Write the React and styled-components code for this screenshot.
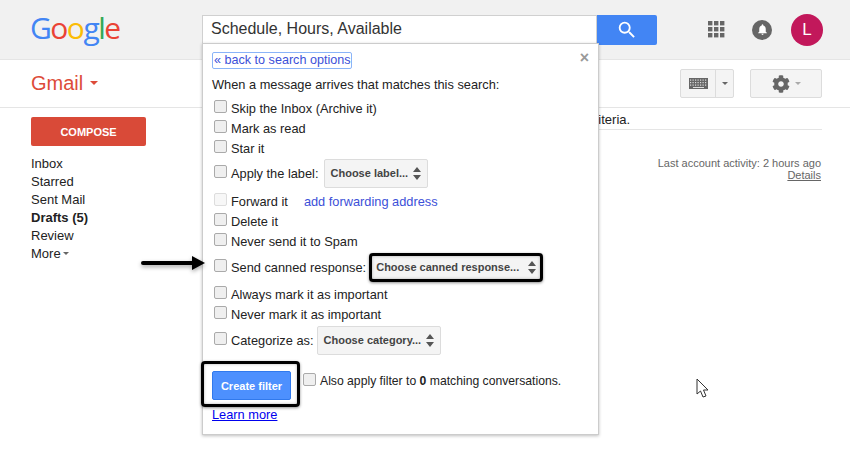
import React from 'react'
import styled, { createGlobalStyle } from 'styled-components'
import { FaCog } from 'react-icons/fa'
import { MdNotifications, MdSearch } from 'react-icons/md'

const GlobalStyle = createGlobalStyle`
  html, body { margin: 0; padding: 0; background: #fff; }
  body { font-family: "Liberation Sans", Arial, sans-serif; font-size: 13px; color: #222; }
`

const Page = styled.div`
  position: relative;
  width: 850px;
  height: 451px;
  overflow: hidden;
`
const Header = styled.header`
  display: flex;
  align-items: center;
  height: 59px;
  background: #f1f1f1;
  border-bottom: 1px solid #e5e5e5;
  padding-left: 30px;
  box-sizing: content-box;
`
const Logo = styled.div`
  width: 172px;
  font-family: "Open Sans", sans-serif;
  font-size: 30px;
  font-weight: 500;
  letter-spacing: -1.5px;
  line-height: 1;
  margin-top: -3px;
`
const Letter = styled.span`
  color: ${p => p.$c};
`
const SearchBox = styled.div`
  display: flex;
  align-items: center;
  box-sizing: border-box;
  width: 395px;
  height: 29px;
  padding: 0 0 2px 8px;
  background: #fff;
  border: 1px solid #d0d0d0;
  font-size: 16px;
  color: #333;
`
const SearchButton = styled.div`
  display: flex;
  align-items: center;
  justify-content: center;
  width: 60px;
  height: 30px;
  background: #4285f4;
  border-radius: 0 2px 2px 0;
  color: #fff;
  font-size: 22px;
`
const HeadIcons = styled.div`
  display: flex;
  align-items: center;
  margin-left: 51px;
`
const Apps = styled.svg`
  width: 17px;
  height: 17px;
  fill: #666;
`
const Bell = styled.div`
  display: flex;
  align-items: center;
  justify-content: center;
  width: 20px;
  height: 20px;
  margin-left: 27px;
  border-radius: 50%;
  background: #666;
  color: #fff;
  font-size: 13px;
`
const Avatar = styled.div`
  display: flex;
  align-items: center;
  justify-content: center;
  width: 32px;
  height: 32px;
  margin-left: 19px;
  border-radius: 50%;
  background: #c2185b;
  color: #fff;
  font-size: 17px;
`
const SubBar = styled.div`
  display: flex;
  align-items: center;
  height: 47px;
  padding: 0 28px 0 31px;
  border-bottom: 1px solid #e5e5e5;
`
const GmailTitle = styled.div`
  display: flex;
  align-items: center;
  flex: 1;
  font-size: 20px;
  color: #dd4b39;
  margin-top: -1px;
`
const Caret = styled.span`
  display: inline-block;
  width: 0;
  height: 0;
  border-left: ${p => p.$s || 3}px solid transparent;
  border-right: ${p => p.$s || 3}px solid transparent;
  border-top: ${p => p.$s || 3}px solid ${p => p.$c || '#666'};
  margin-left: ${p => p.$m || 0}px;
`
const ToolButton = styled.div`
  display: flex;
  align-items: center;
  justify-content: center;
  box-sizing: border-box;
  height: 29px;
  width: ${p => p.$w}px;
  margin-left: ${p => p.$ml || 0}px;
  background: #f4f4f4;
  border: 1px solid #dcdcdc;
  border-radius: 2px;
`
const KeyPart = styled.div`
  display: flex;
  align-items: center;
  justify-content: center;
  height: 100%;
  width: 34px;
  border-right: 1px solid #dcdcdc;
`
const DropPart = styled.div`
  display: flex;
  align-items: center;
  justify-content: center;
  flex: 1;
`
const Keyboard = styled.svg`
  width: 19px;
  height: 11px;
`
const Gear = styled(FaCog)`
  color: #666;
  font-size: 18px;
`
const Body = styled.div`
  display: flex;
`
const Sidebar = styled.nav`
  width: 115px;
  margin-left: 31px;
  padding-top: 9px;
`
const Compose = styled.div`
  display: flex;
  align-items: center;
  justify-content: center;
  height: 29px;
  background: #d94a38;
  border-radius: 2px;
  color: #fff;
  font-size: 11px;
  font-weight: 700;
  margin-bottom: 8px;
`
const NavItem = styled.div`
  display: flex;
  align-items: center;
  height: 18px;
  font-size: 13px;
  font-weight: ${p => (p.$bold ? 700 : 400)};
  color: #222;
`
const Main = styled.main`
  flex: 1;
  margin: 0 28px 0 60px;
  padding-top: 4px;
`
const Notice = styled.div`
  height: 17px;
  padding-left: 388px;
  border-bottom: 1px solid #e5e5e5;
  font-size: 13px;
  color: #222;
  line-height: 15px;
`
const Activity = styled.div`
  margin-top: 27px;
  padding-right: 1px;
  text-align: right;
  font-size: 11px;
  line-height: 12px;
  color: #666;
`
const ActivityLink = styled.div`
  text-decoration: underline;
`

/* filter dialog, sits over the inbox */
const Dialog = styled.section`
  position: absolute;
  left: 202px;
  top: 43px;
  box-sizing: border-box;
  width: 397px;
  height: 392px;
  padding: 8px 9px 0;
  background: #fff;
  border: 1px solid #ccc;
  box-shadow: 0 1px 3px rgba(0, 0, 0, .25);
  font-size: 12.8px;
  color: #222;
`
const Close = styled.div`
  position: absolute;
  right: 9px;
  top: 5px;
  font-size: 16px;
  font-weight: 700;
  color: #999;
  line-height: 18px;
`
const BackLink = styled.a`
  display: inline-block;
  height: 15px;
  padding: 0 0 0 1px;
  margin-bottom: 7px;
  border: 1px solid #8ab4f8;
  border-radius: 2px;
  color: #3c50d8;
  font-size: 12.6px;
  line-height: 15px;
`
const Intro = styled.div`
  height: 18px;
  line-height: 18px;
  margin-bottom: 4px;
`
const Row = styled.div`
  display: flex;
  align-items: center;
  height: ${p => p.$h || 20}px;
  margin-top: ${p => p.$mt || 0}px;
  padding-left: 2px;
`
const Check = styled.span`
  flex: none;
  box-sizing: border-box;
  width: 13px;
  height: 13px;
  margin: -3px 4px 0 0;
  background: ${p => (p.$off ? '#f7f7f7' : '#efefef')};
  border: 1px solid ${p => (p.$off ? '#ddd' : '#aaa')};
  border-radius: 2px;
`
const FwdLink = styled.a`
  margin-left: 16px;
  color: #3c50d8;
`
const Select = styled.div`
  display: flex;
  align-items: center;
  justify-content: space-between;
  box-sizing: border-box;
  width: ${p => p.$w}px;
  height: 29px;
  padding: 0 6px;
  background: #f4f4f4;
  border: 1px solid #dcdcdc;
  border-radius: 2px;
  font-size: 11px;
  font-weight: 700;
  color: #444;
`
const SelectSlot = styled.div`
  margin-left: ${p => p.$ml || 5}px;
`
const Updown = styled.svg`
  width: 8px;
  height: 13px;
  fill: #555;
`
const Marked = styled.div`
  position: relative;
  &::after {
    content: "";
    position: absolute;
    inset: ${p => p.$inset || '0'};
    border: 3px solid #000;
    border-radius: 4px;
    box-shadow: 0 1px 3px rgba(0, 0, 0, .45), inset 0 0 3px rgba(0, 0, 0, .3);
  }
`
const FilterRow = styled.div`
  display: flex;
  align-items: flex-start;
  margin-top: 16px;
`
const CreateButton = styled.div`
  display: flex;
  align-items: center;
  justify-content: center;
  width: 79px;
  height: 29px;
  background: #4d90fe;
  border: 1px solid #3079ed;
  box-sizing: border-box;
  border-radius: 2px;
  color: #fff;
  font-size: 11px;
  font-weight: 700;
`
const ApplyAll = styled.div`
  display: flex;
  align-items: center;
  height: 20px;
  margin-left: 12px;
  font-size: 12.2px;
`
const LearnMore = styled.a`
  display: inline-block;
  margin-top: 7px;
  color: #00e;
  text-decoration: underline;
`
const Arrow = styled.svg`
  position: absolute;
  left: 140px;
  top: 255px;
  width: 68px;
  height: 18px;
  filter: drop-shadow(0 2px 2px rgba(0, 0, 0, .35));
`
const Pointer = styled.svg`
  position: absolute;
  left: 696px;
  top: 378px;
  width: 14px;
  height: 21px;
`

const Spinner = () => (
  <Updown viewBox="0 0 8 13">
    <path d="M4 0 8 5H0ZM0 8H8L4 13Z" />
  </Updown>
)

const CheckRow = ({ children, off, h, mt }) => (
  <Row $h={h} $mt={mt}>
    <Check $off={off} />
    <span>{children}</span>
  </Row>
)

const logo = [['G', '#4285f4'], ['o', '#ea4335'], ['o', '#fbbc05'], ['g', '#4285f4'], ['l', '#34a853'], ['e', '#ea4335']]
const navItems = ['Inbox', 'Starred', 'Sent Mail']

export default function App() {
  return (
    <Page>
      <GlobalStyle />
      <Header>
        <Logo>
          {logo.map(([l, c], i) => (
            <Letter key={i} $c={c}>{l}</Letter>
          ))}
        </Logo>
        <SearchBox>Schedule, Hours, Available</SearchBox>
        <SearchButton><MdSearch /></SearchButton>
        <HeadIcons>
          <Apps viewBox="0 0 17 17">
            {[0, 6, 12].map(y => [0, 6, 12].map(x => (
              <rect key={`${x}-${y}`} x={x} y={y} width="4.4" height="4.4" />
            )))}
          </Apps>
          <Bell><MdNotifications /></Bell>
          <Avatar>L</Avatar>
        </HeadIcons>
      </Header>

      <SubBar>
        <GmailTitle>Gmail<Caret $s={4} $c="#dd4b39" $m={7} /></GmailTitle>
        <ToolButton $w={54}>
          <KeyPart>
            <Keyboard viewBox="0 0 19 11">
              <rect width="19" height="11" fill="#666" />
              {[1.5, 4, 6.5].map(y => [1.5, 4, 6.5, 9, 11.5, 14, 16.5].map(x => (
                <rect key={`${x}-${y}`} x={x - 0.5} y={y} width="1.2" height="1.2" fill="#ddd" />
              )))}
              <rect x="4" y="9" width="11" height="1" fill="#ddd" />
            </Keyboard>
          </KeyPart>
          <DropPart><Caret $s={3.5} /></DropPart>
        </ToolButton>
        <ToolButton $w={72} $ml={16}>
          <Gear />
          <Caret $s={3} $c="#aaa" $m={5} />
        </ToolButton>
      </SubBar>

      <Body>
        <Sidebar>
          <Compose>COMPOSE</Compose>
          {navItems.map(n => <NavItem key={n}>{n}</NavItem>)}
          <NavItem $bold>Drafts (5)</NavItem>
          <NavItem>Review</NavItem>
          <NavItem>More<Caret $m={2} /></NavItem>
        </Sidebar>
        <Main>
          <Notice>riteria.</Notice>
          <Activity>
            Last account activity: 2 hours ago
            <ActivityLink>Details</ActivityLink>
          </Activity>
        </Main>
      </Body>

      <Dialog>
        <Close>×</Close>
        <BackLink>« back to search options</BackLink>
        <Intro>When a message arrives that matches this search:</Intro>
        <CheckRow>Skip the Inbox (Archive it)</CheckRow>
        <CheckRow>Mark as read</CheckRow>
        <CheckRow>Star it</CheckRow>
        <Row $h={30}>
          <Check />
          <span>Apply the label:</span>
          <SelectSlot><Select $w={104}>Choose label...<Spinner /></Select></SelectSlot>
        </Row>
        <Row $mt={3}>
          <Check $off />
          <span>Forward it</span>
          <FwdLink>add forwarding address</FwdLink>
        </Row>
        <CheckRow>Delete it</CheckRow>
        <CheckRow>Never send it to Spam</CheckRow>
        <Row $h={30} $mt={1}>
          <Check />
          <span>Send canned response:</span>
          <SelectSlot $ml={3}>
            <Marked><Select $w={174}>Choose canned response...<Spinner /></Select></Marked>
          </SelectSlot>
        </Row>
        <CheckRow mt={2}>Always mark it as important</CheckRow>
        <CheckRow>Never mark it as important</CheckRow>
        <Row $h={30} $mt={1}>
          <Check />
          <span>Categorize as:</span>
          <SelectSlot $ml={3}><Select $w={124}>Choose category...<Spinner /></Select></SelectSlot>
        </Row>
        <FilterRow>
          <Marked $inset="-10px -9px -7px -11px">
            <CreateButton>Create filter</CreateButton>
          </Marked>
          <ApplyAll>
            <Check />
            <span>Also apply filter to <b>0</b> matching conversations.</span>
          </ApplyAll>
        </FilterRow>
        <LearnMore>Learn more</LearnMore>
      </Dialog>

      <Arrow viewBox="0 0 68 18">
        <path d="M3 8H54" stroke="#000" strokeWidth="4" strokeLinecap="round" />
        <path d="M52 1 65 8 52 15Z" fill="#000" />
      </Arrow>
      <Pointer viewBox="0 0 14 21">
        <path d="M1 1V16L4.5 13 7 19 10 18 7.5 12H12Z" fill="#fff" stroke="#333" strokeWidth="1" />
      </Pointer>
    </Page>
  )
}
